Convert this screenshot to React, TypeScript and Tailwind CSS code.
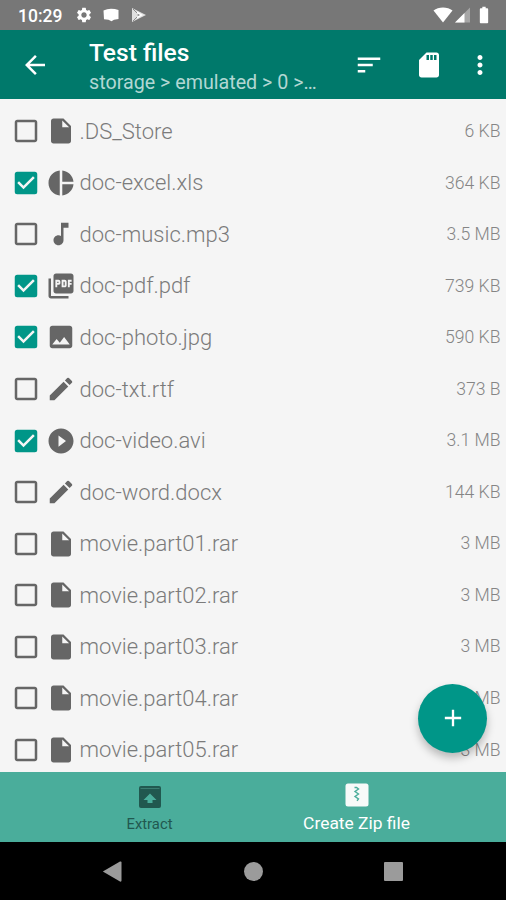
import React from "react";
import type { IconType } from "react-icons";
import {
    MdAdd,
    MdArrowBack,
    MdBatteryFull,
    MdCheckBox,
    MdCheckBoxOutlineBlank,
    MdEdit,
    MdImage,
    MdInsertDriveFile,
    MdMoreVert,
    MdMusicNote,
    MdPictureAsPdf,
    MdPieChart,
    MdPlayCircleFilled,
    MdSdCard,
    MdSettings,
    MdSort,
} from "react-icons/md";

type FileItem = {
    name: string;
    size: string;
    icon: IconType;
    checked?: boolean;
};

const files: FileItem[] = [
    { name: ".DS_Store", size: "6 KB", icon: MdInsertDriveFile },
    { name: "doc-excel.xls", size: "364 KB", icon: MdPieChart, checked: true },
    { name: "doc-music.mp3", size: "3.5 MB", icon: MdMusicNote },
    { name: "doc-pdf.pdf", size: "739 KB", icon: MdPictureAsPdf, checked: true },
    { name: "doc-photo.jpg", size: "590 KB", icon: MdImage, checked: true },
    { name: "doc-txt.rtf", size: "373 B", icon: MdEdit },
    { name: "doc-video.avi", size: "3.1 MB", icon: MdPlayCircleFilled, checked: true },
    { name: "doc-word.docx", size: "144 KB", icon: MdEdit },
    { name: "movie.part01.rar", size: "3 MB", icon: MdInsertDriveFile },
    { name: "movie.part02.rar", size: "3 MB", icon: MdInsertDriveFile },
    { name: "movie.part03.rar", size: "3 MB", icon: MdInsertDriveFile },
    { name: "movie.part04.rar", size: "3 MB", icon: MdInsertDriveFile },
    { name: "movie.part05.rar", size: "3 MB", icon: MdInsertDriveFile },
];

function StatusBar() {
    return (
        <div className="h-[30px] shrink-0 bg-[#777777] flex items-center justify-between pl-[18px] pr-[17px] text-white">
            <div className="flex items-center">
                <span className="w-[57px] pt-[3px] text-[17.5px] leading-none font-medium">10:29</span>
                <MdSettings className="size-[18px]" />
                <svg className="ml-[9px] w-[18px] h-[14px]" viewBox="0 0 18 14" fill="currentColor">
                    <path d="M1.500 2.500Q5 .8 9 .8t7.500 1.200v9l-4.500.8L9.500 13.300l-3-1.500-4.500-.5z" />
                </svg>
                <svg className="ml-[11px] w-[16px] h-[16px]" viewBox="0 0 16 16">
                    <path d="M1 1v14L15 8z" fill="#e0e0e0" />
                    <path d="M2 2 8 8l-6 6" fill="none" stroke="#8a8a8a" strokeWidth="1" />
                    <path d="M6 4.500 12 8l-6 3.500z" fill="#ffffff" />
                    <path d="M6.500 6.500v3l2.500-1.500z" fill="#8a8a8a" />
                </svg>
            </div>
            <div className="flex items-center">
                <svg className="w-[20px] h-[16px]" viewBox="0 0 20 16" fill="currentColor">
                    <path d="M10 15.500.5 3.500C3 1.500 6.400.5 10 .5s7 1 9.500 3z" />
                </svg>
                <svg className="ml-[2px] w-[16px] h-[16px]" viewBox="0 0 16 16" fill="currentColor">
                    <path d="M0 15.500 15 .5v15z" opacity=".35" />
                    <path d="M0 15.500 9.500 6v9.500z" />
                </svg>
                <MdBatteryFull className="ml-[3px] -mr-[5px] size-[20px]" />
            </div>
        </div>
    );
}

function Toolbar() {
    return (
        <div className="h-[69px] shrink-0 bg-[#00796b] flex items-center pl-5 text-white">
            <MdArrowBack className="size-[30px]" />
            <div className="ml-[39px] w-[262px] pt-[7px]">
                <h1 className="text-[24.6px] leading-[29px] font-medium">Test files</h1>
                <p className="text-[19.7px] leading-[31px] text-[#b2d7d3]">storage &gt; emulated &gt; 0 &gt;…</p>
            </div>
            <MdSort className="ml-[3px] size-[30px]" />
            <MdSdCard className="ml-[30px] size-[30px]" />
            <MdMoreVert className="ml-[21px] size-[30px]" />
        </div>
    );
}

function FileRow({ name, size, icon: Icon, checked }: FileItem) {
    return (
        <li className="h-[51.55px] flex items-center pl-[11px] pr-[5.5px] text-[#7b7b7b]">
            {checked ? (
                <MdCheckBox className="size-[30px] text-[#009688]" />
            ) : (
                <MdCheckBoxOutlineBlank className="size-[30px] text-[#666666]" />
            )}
            <Icon className="ml-[5px] size-[30px] text-[#666666]" />
            <span className="ml-[3.5px] flex-1 pt-px text-[22px] leading-none font-light">{name}</span>
            <span className="pt-px text-[17.6px] leading-none font-light text-[#858585]">{size}</span>
        </li>
    );
}

function ActionBar() {
    return (
        <div className="h-[70px] shrink-0 bg-[#4aad9b] flex justify-center">
            <div className="w-[207px] flex flex-col items-center pt-[10px] text-[#21584f]">
                <svg className="size-[30px]" viewBox="0 0 30 30">
                    <rect x="4" y="4" width="22" height="22" rx="2" fill="currentColor" />
                    <path d="M5.500 6.500h19" stroke="#3a7d71" strokeWidth="1" />
                    <path d="M15 11.500 21.500 18h-4v3h-5v-3h-4z" fill="#4aad9b" />
                </svg>
                <span className="mt-[3px] text-[14.8px] leading-[18px]">Extract</span>
            </div>
            <div className="w-[207px] flex flex-col items-center pt-[8px] text-white">
                <svg className="size-[30px]" viewBox="0 0 30 30">
                    <rect x="3.500" y="3.500" width="23" height="23" rx="2.500" fill="#f7faf9" />
                    <path
                        d="M12.500 7.500h2l2 1.500-3.500 2.500 3.500 2.500-3.500 2.500 3.500 2.500-1.500 1.800"
                        fill="none"
                        stroke="#4aad9b"
                        strokeWidth="1.400"
                    />
                </svg>
                <span className="mt-[3px] text-[17.4px] leading-[20px]">Create Zip file</span>
            </div>
        </div>
    );
}

function NavigationBar() {
    return (
        <div className="h-[58px] shrink-0 bg-black flex items-center justify-between pl-[102px] pr-[103px] text-[#9b9b9b]">
            <svg className="w-[20px] h-[21px]" viewBox="0 0 20 21" fill="currentColor">
                <path d="M.8 10.500 18 .5q1.500-.5 1.500 1v18q0 1.500-1.500 1z" />
            </svg>
            <div className="size-[19px] rounded-full bg-[#9b9b9b]" />
            <div className="size-[19px] rounded-[1px] bg-[#9b9b9b]" />
        </div>
    );
}

export default function App() {
    return (
        <div className="w-[506px] h-[900px] flex flex-col overflow-hidden bg-[#f5f5f5] font-['Roboto',sans-serif]">
            <StatusBar />
            <Toolbar />

            <div className="relative h-[673px] shrink-0">
                <ul className="h-full overflow-hidden pt-[6.500px]">
                    {files.map((file) => (
                        <FileRow key={file.name} {...file} />
                    ))}
                </ul>
                <button className="absolute right-[19px] bottom-[19.5px] size-[69px] rounded-full bg-[#009688] text-white flex items-center justify-center shadow-[0_5px_8px_rgba(0,0,0,0.25)]">
                    <MdAdd className="size-[28px]" />
                </button>
            </div>

            <ActionBar />
            <NavigationBar />
        </div>
    );
}
